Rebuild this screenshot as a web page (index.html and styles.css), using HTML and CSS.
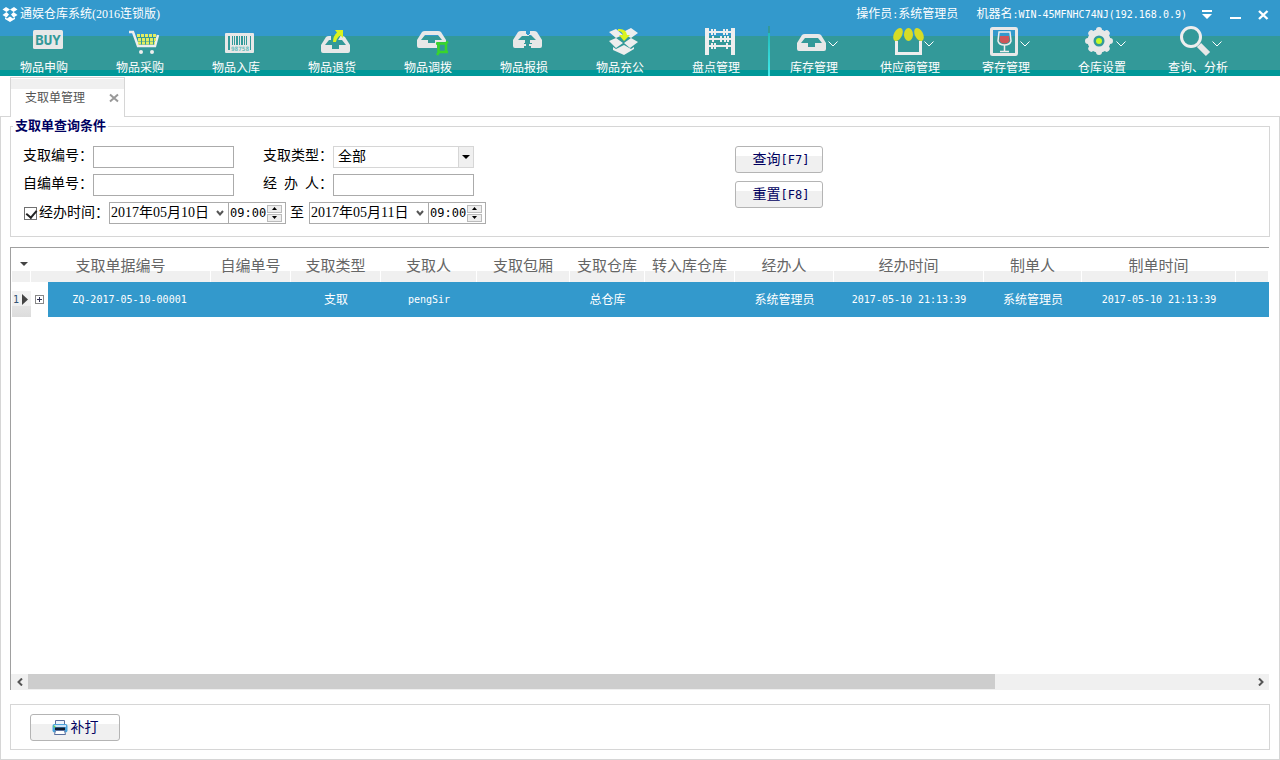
FILE: index.html
```html
<!DOCTYPE html>
<html lang="zh-CN">
<head>
<meta charset="utf-8">
<title>通娱仓库系统</title>
<link rel="stylesheet" href="styles.css">
</head>
<body>
<header class="app-header">
  <div class="titlebar">
    <svg class="logo" viewBox="0 0 16 16"><path fill="#fff" d="M4 1 8 3.500 4.500 6 0.500 3.500ZM12 1 15.500 3.500 11.500 6 8 3.500ZM4.500 6 7 8.500 4.500 11.500 0.500 9ZM11.500 6 15.500 9 11.500 11.500 9 8.500ZM3 11 5 12.500 8 10.500 11 12.500 13 11V13L8 16 3 13Z"/></svg>
    <span class="title">通娱仓库系统(2016连锁版)</span>
    <span class="operator">操作员<span class="mono">:</span>系统管理员</span>
    <span class="machine">机器名<span class="mono">:WIN-45MFNHC74NJ(192.168.0.9)</span></span>
    <button class="win-btn" aria-label="菜单"><svg viewBox="0 0 12 12"><path fill="#fff" d="M1 1H11V3H1ZM1 5H11L6 10Z"/></svg></button>
    <button class="win-btn" aria-label="最小化"><svg viewBox="0 0 12 12"><path fill="#fff" d="M1 8H12V10H1Z"/></svg></button>
    <button class="win-btn" aria-label="关闭"><svg viewBox="0 0 12 12"><path stroke="#fff" stroke-width="2.400" d="M2 2 10.500 10M10.500 2 2 10"/></svg></button>
  </div>
  <nav class="toolbar">
    <div class="tool-group tool-group-main">
      <button class="tool"><svg viewBox="0 0 48 32"><rect x="13" y="4" width="30" height="19" rx="1.500" fill="#e8e8e8"/><text class="buy" x="28" y="19" text-anchor="middle">BUY</text></svg>物品申购</button>
      <button class="tool"><svg viewBox="0 0 48 32"><path fill="none" stroke="#eee" stroke-width="2.500" d="M13 6H17L22 20H39L42 9"/><path fill="none" stroke="#e1ed62" stroke-width="3" stroke-dasharray="3 1" d="M21 9.500H40M22 13.500H40M22 17H39"/><circle cx="25" cy="26" r="2" fill="#eee"/><circle cx="36" cy="26" r="2" fill="#eee"/></svg>物品采购</button>
      <button class="tool"><svg viewBox="0 0 48 32"><rect x="13" y="7" width="29" height="20" rx="1" fill="#e8e8e8"/><path fill="#399" d="M16 10h2v14h-2zM20 10h1v9h-1zM22 10h1v9h-1zM24 10h2v9h-2zM27 10h1v9h-1zM29 10h2v9h-2zM32 10h1v9h-1zM34 10h1v9h-1zM38 10h1v14h-1z"/><text class="digits" x="28" y="25" text-anchor="middle">98758</text></svg>物品入库</button>
      <button class="tool"><svg viewBox="0 0 48 32"><path fill="#e8e8e8" fill-rule="evenodd" d="M13 19 18 11Q19 10 21 10H34Q36 10 37 11L42 19V25Q42 27 40 27H15Q13 27 13 25ZM17 19H24V23H31V19H38L34 14H21Z"/><path fill="#399" d="M23 9H33L29 16H23Z"/><path fill="#dbf31f" d="M27 4H35V12L32.500 9.500Q29 11 28 16H25Q25 10 29 6.500Z"/></svg>物品退货</button>
      <button class="tool"><svg viewBox="0 0 48 32"><path fill="#e8e8e8" fill-rule="evenodd" d="M13 14 18 6Q19 5 21 5H34Q36 5 37 6L42 14V16H33V22H15Q13 22 13 20ZM17 14H24V17H31V14H38L34 9H21Z"/><path fill="none" stroke="#39d52b" stroke-width="2.500" d="M32 17.500H42V25M34.500 16V26H44M41 18 44 15.500M35 26 33 29"/></svg>物品调拨</button>
      <button class="tool"><svg viewBox="0 0 48 32"><path fill="#e8e8e8" d="M26 5V8H29V10H22L18 14H25V17H24V18H26V20H24V22H15Q13 22 13 20V14L18 6Q19 5 21 5ZM30 5V8H27V9H31L36 14H30V17H32V18H29V20H31V22H40Q42 22 42 20V14L37 6Q36 5 34 5Z"/></svg>物品报损</button>
      <button class="tool"><svg viewBox="0 0 48 32"><path fill="#eee" d="M13 6 20 3 27 9 20 12ZM29 5 35 2 42 7 35 12 29 9ZM13 15 20 12 27 17 20 22ZM35 12 42 16 34 22 28 17ZM17 21 20 23 28 19 35 23 38 21V23L28 29 17 24Z"/><path fill="#dbf31f" d="M22 3Q30 2 31 9H34L28 15 23 9H27Q26 5 22 5Z"/></svg>物品充公</button>
      <button class="tool"><svg viewBox="0 0 48 32"><path fill="none" stroke="#eee" d="M15 2V29M41 2V29" stroke-width="4"/><path fill="none" stroke="#eee" stroke-width="2" d="M17 6H40M17 13H40M17 20H40"/><path fill="none" stroke="#eee" stroke-width="2" d="M20 3V9M23 3V9M32 3V9M35 3V9M21 10V16M29 10V16M33 10V16M36 10V16M20 17V23M23 17V23M35 17V23"/></svg>盘点管理</button>
    </div>
    <div class="tool-group">
      <button class="tool"><svg viewBox="0 0 48 32"><path fill="#e8e8e8" fill-rule="evenodd" d="M7 17 12 9Q13 8 15 8H28Q30 8 31 9L36 17V23Q36 25 34 25H9Q7 25 7 23ZM11 17H18V21H25V17H32L28 12H15Z"/><path fill="none" stroke="#fff" d="M38.500 15.500 43 20 47.500 15.500"/></svg>库存管理</button>
      <button class="tool"><svg viewBox="0 0 48 32"><path fill="none" stroke="#eee" stroke-width="3" d="M10.500 15V27.500H34.500V15"/><g fill="#d6dc27"><ellipse cx="12" cy="8.500" rx="4" ry="7" transform="rotate(28 12 8.500)"/><ellipse cx="22.500" cy="8.500" rx="4.500" ry="6.500"/><ellipse cx="33" cy="8.500" rx="4" ry="7" transform="rotate(-28 33 8.500)"/></g><path fill="none" stroke="#fff" d="M38.500 15.500 43 20 47.500 15.500"/></svg>供应商管理</button>
      <button class="tool"><svg viewBox="0 0 48 32"><rect x="9.500" y="2.500" width="25" height="26" rx="1" fill="none" stroke="#e8e8e8" stroke-width="3"/><path fill="none" stroke="#eee" stroke-width="1.500" d="M17 6H28L29 15Q28 19 22.500 19 17 19 16 15ZM22.500 19V25M18 25.500H27"/><path fill="#ce5558" d="M18 10H27L27.500 15Q26 17.500 22.500 17.500 19 17.500 17.500 15Z"/><path fill="none" stroke="#fff" d="M38.500 15.500 43 20 47.500 15.500"/></svg>寄存管理</button>
      <button class="tool"><svg viewBox="0 0 48 32"><g fill="none" stroke="#e8e8e8"><circle cx="21" cy="15" r="8.500" stroke-width="6"/><path stroke-width="6" stroke-linecap="round" d="M21 4V5M21 25V26M10 15H11M31 15H32M13.300 7.300 14 8M28 22 28.700 22.700M13.300 22.700 14 22M28 8 28.700 7.300"/></g><circle cx="21" cy="15" r="3" fill="#c6fa27"/><path fill="none" stroke="#fff" d="M38.500 15.500 43 20 47.500 15.500"/></svg>仓库设置</button>
      <button class="tool"><svg viewBox="0 0 48 32"><circle cx="17" cy="11" r="9.500" fill="#399" stroke="#eee" stroke-width="3"/><path stroke="#e8e8e8" stroke-width="6" d="M25 19 34 28"/><path fill="none" stroke="#fff" d="M38.500 15.500 43 20 47.500 15.500"/></svg>查询、分析</button>
    </div>
  </nav>
</header>

<div class="tabs">
  <div class="tab">
    <span>支取单管理</span>
    <button class="tab-close" aria-label="关闭标签"><svg viewBox="0 0 10 10"><path stroke="#999" stroke-width="2" d="M1 1.500 9 8.500M9 1.500 1 8.500"/></svg></button>
  </div>
</div>

<main class="page">
  <fieldset class="query">
    <legend>支取单查询条件</legend>
    <div class="fields">
      <label for="code">支取编号：</label><input class="box" id="code" type="text">
      <label class="second" for="kind">支取类型：</label>
      <div class="select-wrap"><select id="kind"><option>全部</option></select><span class="select-arrow"><svg viewBox="0 0 8 4"><path d="M0 0H8L4 4Z"/></svg></span></div>
      <label for="own">自编单号：</label><input class="box" id="own" type="text">
      <label class="second" for="agent">经  办  人：</label><input class="box" id="agent" type="text">
      <div class="period">
        <input class="tick" id="use-time" type="checkbox" checked><label class="time-label" for="use-time">经办时间：</label>
        <div class="picker">
          <input class="date" type="text" value="2017年05月10日" aria-label="开始日期">
          <button class="drop" aria-label="选择开始日期"><svg viewBox="0 0 8 6"><path fill="none" stroke="#555" stroke-width="2" d="M1 1 4 4.500 7 1"/></svg></button>
          <input class="time" type="text" value="09:00" aria-label="开始时间">
          <div class="spin"><button aria-label="增加"><svg viewBox="0 0 5 3"><path d="M0 3H5L2.500 0Z"/></svg></button><button aria-label="减少"><svg viewBox="0 0 5 3"><path d="M0 0H5L2.500 3Z"/></svg></button></div>
        </div>
        <span class="to">至</span>
        <div class="picker">
          <input class="date" type="text" value="2017年05月11日" aria-label="结束日期">
          <button class="drop" aria-label="选择结束日期"><svg viewBox="0 0 8 6"><path fill="none" stroke="#555" stroke-width="2" d="M1 1 4 4.500 7 1"/></svg></button>
          <input class="time" type="text" value="09:00" aria-label="结束时间">
          <div class="spin"><button aria-label="增加"><svg viewBox="0 0 5 3"><path d="M0 3H5L2.500 0Z"/></svg></button><button aria-label="减少"><svg viewBox="0 0 5 3"><path d="M0 0H5L2.500 3Z"/></svg></button></div>
        </div>
      </div>
    </div>
    <div class="actions">
      <button class="btn">查询<span class="mono">[F7]</span></button>
      <button class="btn">重置<span class="mono">[F8]</span></button>
    </div>
  </fieldset>

  <section class="grid">
    <table>
      <colgroup><col class="w-mark"><col class="w-expand"><col class="w-bill"><col class="w-own"><col class="w-kind"><col class="w-person"><col class="w-room"><col class="w-store"><col class="w-kind"><col class="w-agent"><col class="w-time"><col class="w-maker"><col class="w-made"><col></colgroup>
      <thead>
        <tr>
          <th><svg class="menu-arrow" viewBox="0 0 8 4"><path fill="#444" d="M0 0H8L4 4Z"/></svg></th>
          <th colspan="2">支取单据编号</th><th>自编单号</th><th>支取类型</th><th>支取人</th><th>支取包厢</th><th>支取仓库</th><th>转入库仓库</th><th>经办人</th><th>经办时间</th><th>制单人</th><th>制单时间</th><th></th>
        </tr>
      </thead>
      <tbody>
        <tr>
          <td class="row-mark"><div><span class="mono">1</span><svg viewBox="0 0 6 11"><path fill="#444" d="M0 0 6 5.500 0 11Z"/></svg></div></td>
          <td class="row-expand"><button class="expand" aria-label="展开"><svg viewBox="0 0 9 9"><rect x=".5" y=".5" width="8" height="8" fill="#fff" stroke="#888"/><path stroke="#335" d="M2 4.500H7M4.500 2V7"/></svg></button></td>
          <td class="mono">ZQ-2017-05-10-00001</td><td></td><td>支取</td><td class="mono">pengSir</td><td></td><td>总仓库</td><td></td><td>系统管理员</td><td class="mono">2017-05-10 21:13:39</td><td>系统管理员</td><td class="mono">2017-05-10 21:13:39</td><td></td>
        </tr>
      </tbody>
    </table>
    <div class="scrollbar">
      <button aria-label="向左"><svg viewBox="0 0 6 8"><path fill="none" stroke="#555" stroke-width="2" d="M5 .500 1.500 4 5 7.500"/></svg></button>
      <div class="track"><div class="thumb"></div></div>
      <button aria-label="向右"><svg viewBox="0 0 6 8"><path fill="none" stroke="#555" stroke-width="2" d="M1 .500 4.500 4 1 7.500"/></svg></button>
    </div>
  </section>

  <footer class="footer">
    <button class="btn print"><svg viewBox="0 0 16 16"><path fill="#eef3fb" stroke="#5b6f9c" d="M3.500 .5H12.500V5H3.500Z"/><rect x=".5" y="4" width="15" height="8.500" rx="2" fill="#4aa3dc"/><path fill="#cfe3f6" d="M2 5H14V7H2Z"/><rect x="3" y="7.500" width="10" height="2.500" fill="#111a2c"/><path fill="#fff" stroke="#5b6f9c" d="M3.500 10.500H12.500L13.500 14.500H2.500Z"/><circle cx="2.500" cy="6.500" r="1" fill="#5fdc4b"/></svg>补打</button>
  </footer>
</main>
</body>
</html>
```
FILE: styles.css
```css
* { box-sizing: border-box; }

body {
  margin: 0;
  min-height: 100vh;
  display: flex;
  flex-direction: column;
  background: #fff;
  color: #000;
  font: 14px/20px "Liberation Serif", "Noto Sans CJK SC", sans-serif;
}

button, input, select { font: inherit; color: inherit; }
button { padding: 0; border: 0; background: none; }
svg { display: block; flex: none; }

.mono { font-family: "DejaVu Sans Mono", monospace; font-size: 10px; }

/* Title bar and toolbar */
.app-header {
  color: #fff;
  font-size: 12px;
  line-height: 16px;
  background: linear-gradient(#39c 36px, #399 36px, #399 70px, #099 70px);
}
.titlebar { display: flex; align-items: center; height: 26px; padding: 2px 11px 0 2px; }
.logo { width: 16px; height: 16px; margin-right: 2px; }
.operator { margin-left: auto; }
.machine { margin: 0 14px 0 18px; }
.win-btn { width: 12px; height: 12px; margin-top: 2px; }
.win-btn + .win-btn { margin-left: 16px; }
.win-btn svg { width: 12px; height: 12px; }

.toolbar { display: flex; height: 50px; }
.tool-group { display: flex; gap: 8px; }
.tool-group-main {
  padding-right: 8px;
  border-right: 2px solid;
  border-image: linear-gradient(#399 8px, #2bb 8px, #4ee) 1;
}
.tool { width: 88px; display: flex; flex-direction: column; align-items: center; white-space: nowrap; }
.tool svg { width: 48px; height: 32px; margin-bottom: 2px; }
.buy { font: bold 14px "DejaVu Sans Mono", monospace; fill: #399; }
.digits { font: bold 6px "DejaVu Sans Mono", monospace; fill: #6bb; }

/* Tabs */
.tabs { display: flex; height: 40px; padding: 1px 10px 0; }
.tab {
  position: relative;
  z-index: 1;
  display: flex;
  align-items: center;
  justify-content: space-between;
  width: 115px;
  height: 40px;
  padding: 0 5px 0 14px;
  border: 1px solid #d6d6d6;
  border-bottom: 0;
  background: linear-gradient(#fff 1px, #f0f0f0 1px, #f0f0f0 11px, #fff 11px);
  color: #555;
  font-size: 12px;
}
.tab-close svg { width: 10px; height: 10px; }

.page {
  flex: 1;
  display: flex;
  flex-direction: column;
  padding: 2px 9px 9px;
  border: 1px solid #d6d6d6;
}

/* Query form */
.query {
  display: flex;
  align-items: flex-start;
  min-width: 0;
  margin: 0;
  padding: 13px 12px 12px;
  border: 1px solid #d6d6d6;
}
.query legend {
  margin-left: -10px;
  padding: 0 2px;
  color: #000060;
  font-size: 13px;
  font-weight: bold;
  line-height: 14px;
}
.fields {
  display: grid;
  grid-template-columns: 70px 141px 99px 141px;
  grid-auto-rows: 22px;
  row-gap: 6px;
}
.fields label { white-space: pre; }
.fields .second { padding-left: 29px; }
.box, .picker { border: 1px solid #ababab; background: #fff; }
.box { width: 100%; height: 22px; padding: 0 4px; }
.select-wrap { position: relative; }
.select-wrap select {
  appearance: none;
  width: 100%;
  height: 22px;
  padding: 0 20px 0 4px;
  border: 1px solid #d6d6d6;
  border-radius: 0;
  background: #fff;
}
.select-arrow {
  position: absolute;
  top: 1px;
  right: 1px;
  bottom: 1px;
  display: flex;
  align-items: center;
  width: 15px;
  padding-left: 3px;
  border-left: 1px solid #d6d6d6;
  background: #f0f0f0;
  pointer-events: none;
}
.select-arrow svg { width: 8px; height: 4px; }

.period { grid-column: 1 / -1; display: flex; align-items: center; }
.tick {
  appearance: none;
  flex: none;
  width: 13px;
  height: 13px;
  margin: 0 2px 0 1px;
  border: 1px solid #707070;
  background: #fff;
}
.tick:checked::before {
  content: "";
  display: block;
  width: 5px;
  height: 8px;
  margin: 0 0 0 3px;
  border: solid #222;
  border-width: 0 2px 2px 0;
  transform: rotate(40deg);
}
.time-label { flex: none; width: 70px; }
.picker { display: flex; flex: none; align-items: center; width: 177px; height: 22px; }
.picker input { border: 0; padding: 0 0 0 1px; background: none; height: 20px; }
.picker .date { width: 106px; }
.picker .drop { width: 12px; }
.picker .drop svg { width: 8px; height: 6px; }
.picker .time {
  width: 39px;
  border-left: 1px solid #ababab;
  font: 12px "DejaVu Sans Mono", monospace;
}
.spin { display: flex; flex-direction: column; gap: 1px; }
.spin button {
  display: flex;
  align-items: center;
  justify-content: center;
  width: 15px;
  height: 8px;
  border: 1px solid #bbb;
  background: #eee;
}
.spin svg { width: 5px; height: 3px; }
.to { flex: none; margin: 0 5px 0 4px; width: 14px; }

.actions { display: flex; flex-direction: column; gap: 8px; margin-left: 261px; }
.btn {
  display: flex;
  align-items: center;
  justify-content: center;
  width: 88px;
  height: 27px;
  padding-left: 4px;
  border: 1px solid #b4b4b4;
  border-radius: 3px;
  background: linear-gradient(#fff 9px, #f0f0f0 9px);
  color: #000060;
}
.btn .mono { font-size: 12px; }

/* Data grid */
.grid {
  flex: 1;
  display: flex;
  flex-direction: column;
  margin: 10px 1px 0 0;
  padding-left: 1px;
  border: solid #a0a0a0;
  border-width: 1px 0 0 1px;
}
table { width: 100%; table-layout: fixed; border-collapse: separate; border-spacing: 0; margin-bottom: auto; }
th, td { padding: 0; text-align: center; white-space: nowrap; overflow: hidden; }
th {
  height: 34px;
  padding-top: 2px;
  border-right: 1px solid #fff;
  background: linear-gradient(#fff 23px, #f0f0f0 23px);
  color: #666;
  font-size: 15px;
  font-weight: normal;
}
td { height: 35px; background: #39c; color: #fff; font-size: 12px; }
.menu-arrow { width: 8px; height: 4px; margin: 0 auto 4px 8px; }
.row-mark {
  background: linear-gradient(#fff 9px, #f2f2f2 9px, #f0f0f0 24px, #e4e4e4 24px, #dcdcdc);
  color: #357;
}
.row-mark div { display: flex; align-items: center; gap: 3px; padding-left: 1px; }
.row-mark svg { width: 6px; height: 11px; }
.row-expand { background: #fff; }
.expand { display: block; margin: 0 auto; }
.expand svg { width: 9px; height: 9px; }
.w-mark { width: 19px; }
.w-expand { width: 17px; }
.w-bill { width: 163px; }
.w-own { width: 80px; }
.w-kind { width: 90px; }
.w-person { width: 96px; }
.w-room { width: 93px; }
.w-store { width: 75px; }
.w-agent { width: 99px; }
.w-time { width: 150px; }
.w-maker { width: 98px; }
.w-made { width: 154px; }
td.mono { font-size: 10px; }

.scrollbar { display: flex; height: 16px; margin-left: -1px; background: #f0f0f0; }
.scrollbar button { width: 17px; display: flex; align-items: center; justify-content: center; }
.scrollbar svg { width: 6px; height: 8px; }
.track { flex: 1; }
.thumb { width: 79%; height: 15px; background: #cdcdcd; }

.footer { margin-top: 14px; padding: 9px 19px 8px; border: 1px solid #d6d6d6; }
.print { width: 90px; gap: 3px; padding-left: 0; }
.print svg { width: 16px; height: 16px; }
```
